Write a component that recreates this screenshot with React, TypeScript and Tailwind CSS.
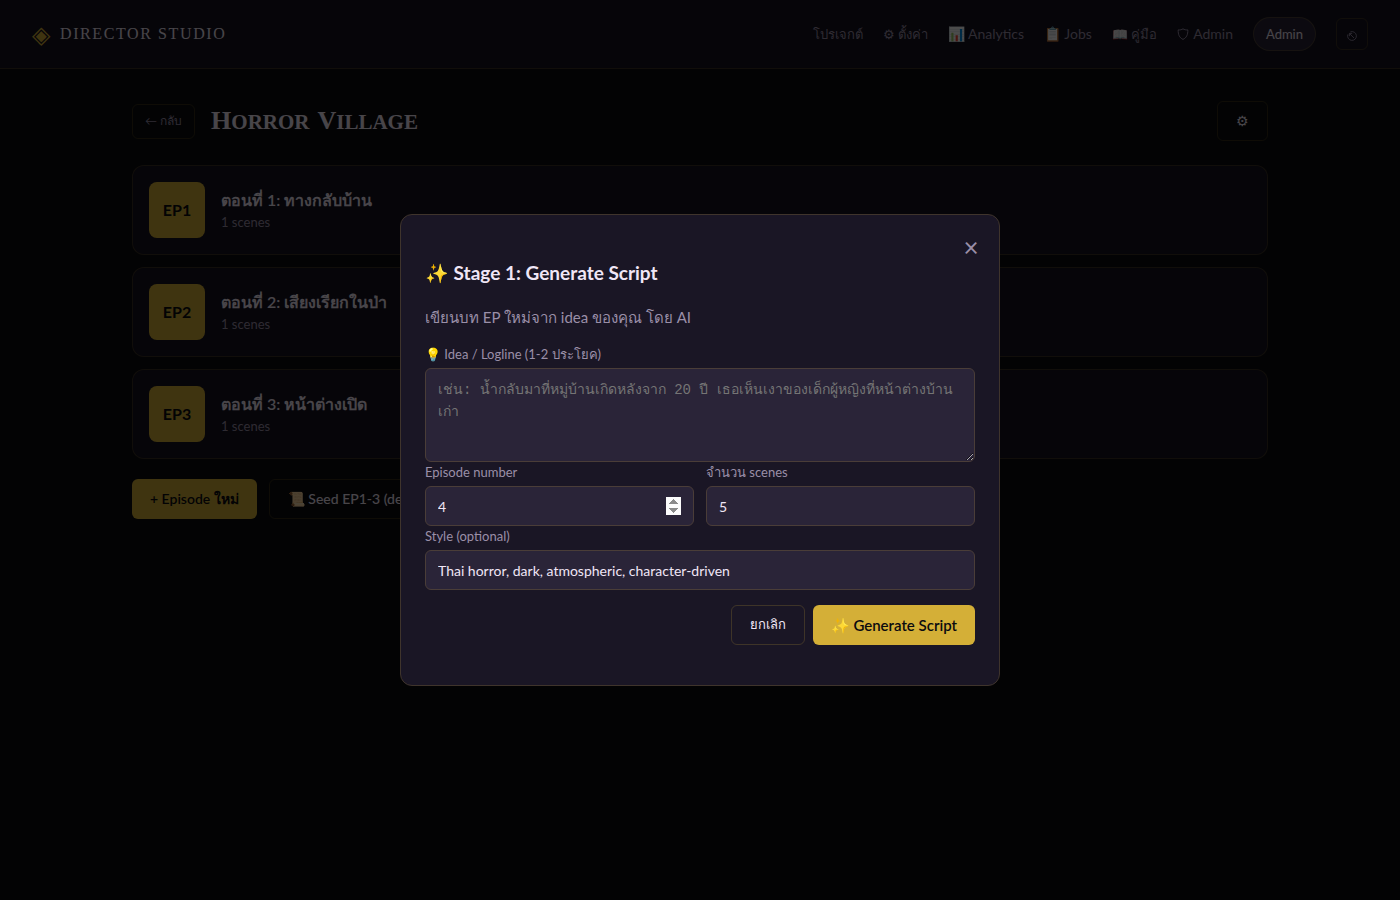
import React, { useState } from 'react'

interface Episode {
  id: number
  title: string
  scenes: number
}

const episodes: Episode[] = [
  { id: 1, title: 'ตอนที่ 1: ทางกลับบ้าน', scenes: 1 },
  { id: 2, title: 'ตอนที่ 2: เสียงเรียกในป่า', scenes: 1 },
  { id: 3, title: 'ตอนที่ 3: หน้าต่างเปิด', scenes: 1 },
]

const navItems = [
  { label: 'โปรเจกต์', size: 'text-[13px]' },
  { label: '⚙ ตั้งค่า', size: 'text-[13px]' },
  { label: '📊 Analytics', size: 'text-sm' },
  { label: '📋 Jobs', size: 'text-sm' },
  { label: '📖 คู่มือ', size: 'text-[13px]' },
]

const labelClass = 'block text-[13px] leading-5 mb-1 text-[#9a8fa8]'
const inputClass =
  'block w-full h-10 px-3 rounded-md border border-[#4a3d38] bg-[#2a2438] text-sm text-[#f0e6f6] outline-none'
const ghostButton = 'h-10 px-[18px] rounded-md border border-[#d4af37]/20 font-medium'
const goldButton = 'h-10 px-[18px] rounded-md bg-[#d4af37] font-semibold text-[#0a0a0f]'

function Header() {
  return (
    <header className="flex items-center justify-between h-[69px] px-8 bg-[#14111f] border-b border-[#d4af37]/20">
      <a href="#" className="flex items-center gap-2.5">
        <span className="text-2xl leading-none text-[#d4af37]">◈</span>
        <span className="font-['Liberation_Serif',serif] text-base tracking-widest">DIRECTOR STUDIO</span>
      </a>
      <nav className="flex items-center gap-5 text-sm text-[#9a8fa8]">
        {navItems.map(item => (
          <a key={item.label} href="#" className={item.size}>{item.label}</a>
        ))}
        <a href="#" className="flex items-center gap-1">
          <svg width="12" height="12" viewBox="0 0 12 12" fill="none" stroke="currentColor">
            <path d="M6 0.8C4.6 1.8 3 2 1.2 1.9C1 6.5 2.4 9.8 6 11.4C9.6 9.8 11 6.5 10.8 1.9C9 2 7.4 1.8 6 0.8Z" />
          </svg>
          Admin
        </a>
        <span className="flex items-center h-[34px] px-3 rounded-full border border-[#d4af37]/20 bg-[#2a2438] text-[13px] text-[#f0e6f6]">
          Admin
        </span>
        <button
          aria-label="Logout"
          className="flex items-center justify-center size-8 pt-1 rounded-md border border-[#d4af37]/20"
        >
          <svg width="10" height="10" viewBox="0 0 10 10" fill="none" stroke="currentColor" strokeWidth="0.9">
            <path d="M3.4 0.9A4.4 4.4 0 1 1 0.9 3.4" />
            <path d="M7 7L2.6 2.6M2.4 5.2V2.4H5.2" />
          </svg>
        </button>
      </nav>
    </header>
  )
}

function EpisodeCard({ episode }: { episode: Episode }) {
  return (
    <li className="flex items-center gap-4 p-4 rounded-xl border border-[#d4af37]/20 bg-[#14111f]">
      <div className="flex items-center justify-center size-14 rounded-lg bg-[#d4af37] font-bold text-[#0a0a0f]">
        EP{episode.id}
      </div>
      <div>
        <h3 className="font-semibold leading-6">{episode.title}</h3>
        <p className="text-[13px] leading-5 text-[#9a8fa8]">{episode.scenes} scenes</p>
      </div>
    </li>
  )
}

function GenerateScriptModal() {
  const [idea, setIdea] = useState('')
  const [episodeNumber, setEpisodeNumber] = useState('4')
  const [sceneCount, setSceneCount] = useState('5')
  const [style, setStyle] = useState('Thai horror, dark, atmospheric, character-driven')

  return (
    <div className="fixed inset-0 flex items-center justify-center bg-black/70">
      <div
        role="dialog"
        aria-labelledby="modal-title"
        className="relative w-full max-w-[600px] px-6 pt-6 pb-10 rounded-xl border border-[#3f342c] bg-[#1a1625]"
      >
        <button aria-label="Close" className="absolute top-5 right-4 size-6 text-[26px] leading-6 text-[#9a8fa8]">
          ×
        </button>
        <h3 id="modal-title" className="mt-[19px] text-[19px] leading-[30px] font-bold">
          ✨ Stage 1: Generate Script
        </h3>
        <p className="mt-4 mb-3.5 text-[15px] leading-[26px] text-[#9a8fa8]">เขียนบท EP ใหม่จาก idea ของคุณ โดย AI</p>

        <label htmlFor="idea" className={labelClass}>💡 Idea / Logline (1-2 ประโยค)</label>
        <textarea
          id="idea"
          value={idea}
          onChange={e => setIdea(e.target.value)}
          placeholder="เช่น: น้ำกลับมาที่หมู่บ้านเกิดหลังจาก 20 ปี เธอเห็นเงาของเด็กผู้หญิงที่หน้าต่างบ้านเก่า"
          className="block w-full h-[94px] px-3 py-2.5 rounded-md border border-[#4a3d38] bg-[#2a2438] font-['Liberation_Mono',monospace] text-sm leading-[22px] placeholder:text-[#757575] resize-y outline-none"
        />

        <div className="grid grid-cols-2 gap-3">
          <div>
            <label htmlFor="episode-number" className={labelClass}>Episode number</label>
            <input
              id="episode-number"
              type="number"
              value={episodeNumber}
              onChange={e => setEpisodeNumber(e.target.value)}
              className={`${inputClass} [&::-webkit-inner-spin-button]:h-[18px] [&::-webkit-inner-spin-button]:opacity-100`}
            />
          </div>
          <div>
            <label htmlFor="scene-count" className={labelClass}>จำนวน scenes</label>
            <input
              id="scene-count"
              type="number"
              value={sceneCount}
              onChange={e => setSceneCount(e.target.value)}
              className={inputClass}
            />
          </div>
        </div>

        <label htmlFor="style" className={labelClass}>Style (optional)</label>
        <input
          id="style"
          type="text"
          value={style}
          onChange={e => setStyle(e.target.value)}
          className={inputClass}
        />

        {/* Actions */}
        <div className="flex justify-end gap-2 mt-[15px]">
          <button className={`${ghostButton} text-[13px]`}>ยกเลิก</button>
          <button className={`${goldButton} text-[15px]`}>✨ Generate Script</button>
        </div>
      </div>
    </div>
  )
}

export default function App() {
  return (
    <div className="min-h-screen bg-[#0a0a0f] font-['Lato','Noto_Sans',sans-serif] text-[#f0e6f6]">
      <Header />
      <main className="max-w-[1200px] mx-auto px-8 pt-8">
        <div className="flex items-center gap-4 mb-6">
          <button className="h-[35px] px-3 rounded-md border border-[#d4af37]/20 text-xs text-[#9a8fa8]">
            ← กลับ
          </button>
          <h1 className="flex-1 flex items-baseline gap-2 font-['Liberation_Serif',serif] text-[21px] leading-8 font-bold uppercase">
            <span className="block first-letter:text-[26px]">Horror</span>{' '}
            <span className="block first-letter:text-[26px]">Village</span>
          </h1>
          <button aria-label="Settings" className={`${ghostButton} text-sm`}>⚙</button>
        </div>

        <ul className="flex flex-col gap-3">
          {episodes.map(episode => (
            <EpisodeCard key={episode.id} episode={episode} />
          ))}
        </ul>

        <div className="flex gap-3 mt-5">
          <button className={`${goldButton} text-sm`}>+ Episode ใหม่</button>
          <button className={`${ghostButton} text-sm`}>📜 Seed EP1-3 (demo)</button>
        </div>
      </main>
      <GenerateScriptModal />
    </div>
  )
}
